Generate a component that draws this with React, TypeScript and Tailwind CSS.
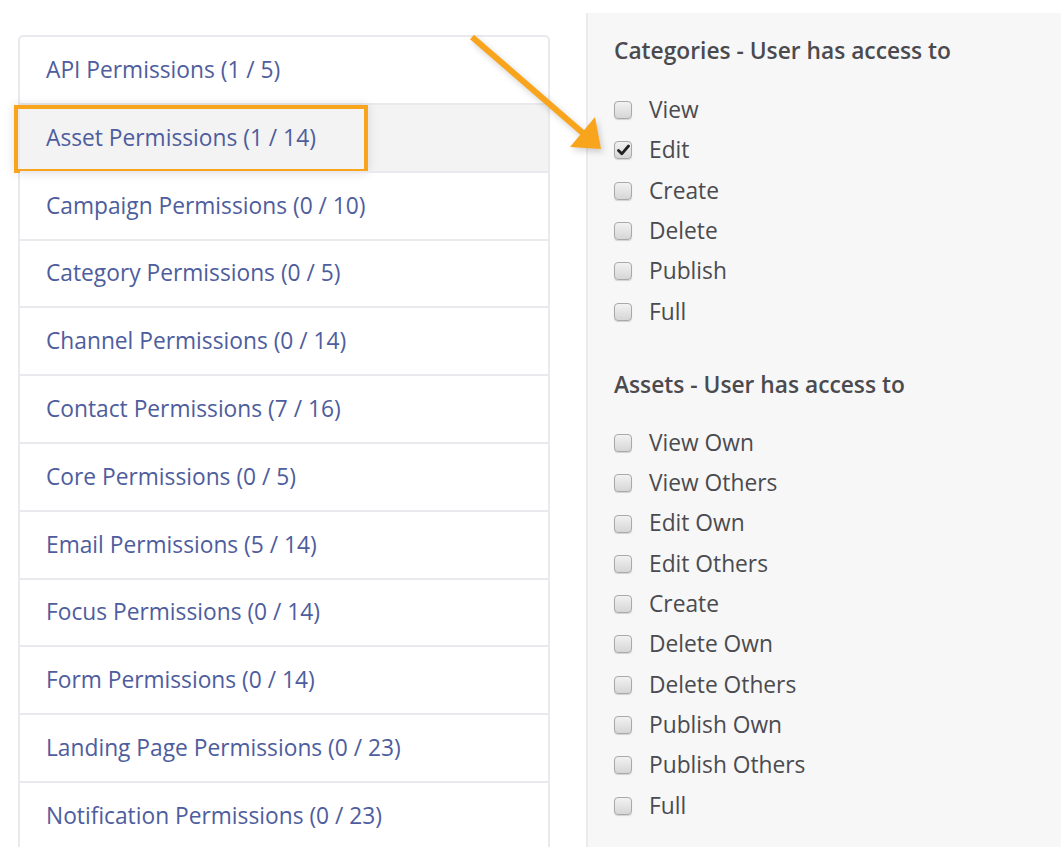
import React from "react";

const perms = [
  "API Permissions (1 / 5)",
  "Asset Permissions (1 / 14)",
  "Campaign Permissions (0 / 10)",
  "Category Permissions (0 / 5)",
  "Channel Permissions (0 / 14)",
  "Contact Permissions (7 / 16)",
  "Core Permissions (0 / 5)",
  "Email Permissions (5 / 14)",
  "Focus Permissions (0 / 14)",
  "Form Permissions (0 / 14)",
  "Landing Page Permissions (0 / 23)",
  "Notification Permissions (0 / 23)",
];

const cat = ["View", "Edit", "Create", "Delete", "Publish", "Full"];
const assets = [
  "View Own",
  "View Others",
  "Edit Own",
  "Edit Others",
  "Create",
  "Delete Own",
  "Delete Others",
  "Publish Own",
  "Publish Others",
  "Full",
];

function Box({ checked }: { checked?: boolean }) {
  return (
    <div className="w-[18px] h-[18px] rounded-[4px] border border-[#a9a9a9] bg-gradient-to-b from-[#f2f2f2] to-[#d6d6d6] shadow-[0_1px_1px_rgba(0,0,0,0.15)] flex items-center justify-center shrink-0">
      {checked && (
        <svg width="13" height="12" viewBox="0 0 13 12">
          <path d="M1.5 6.5 L4.8 9.8 L11.5 2" fill="none" stroke="#222" strokeWidth="2.8" strokeLinecap="round" strokeLinejoin="round" />
        </svg>
      )}
    </div>
  );
}

function Row({ label, checked }: { label: string; checked?: boolean }) {
  return (
    <div className="flex items-center h-[40.3px]">
      <Box checked={checked} />
      <span className="ml-[17px] text-[22.75px] text-[#4b4b4f]">{label}</span>
    </div>
  );
}

export default function App() {
  return (
    <div
      className="relative w-[1061px] h-[847px] overflow-hidden bg-white flex"
      style={{ fontFamily: "'Open Sans', 'Noto Sans', sans-serif" }}
    >
      <div className="pl-[18px] pt-[35px] w-[550px] shrink-0">
        <div className="border-2 border-[#eaeaee] rounded-[5px] bg-white">
          {perms.map((p, i) => (
            <div
              key={p}
              className={
                "relative flex items-center pl-[26px] text-[22.75px] text-[#4e5d9d] " +
                (i > 0 ? "border-t-2 border-[#eaeaee] h-[67.8px] " : "h-[66px] ") +
                (i === 1 ? "bg-[#f3f3f3]" : "")
              }
            >
              {p}
              {i === 1 && (
                <div className="absolute left-[-6px] top-0 w-[354px] h-[68px] border-[4px] border-[#f8a51d] shadow-[0_0_10px_rgba(0,0,0,0.12)]" />
              )}
            </div>
          ))}
        </div>
      </div>
      <div className="ml-[36px] mt-[13px] flex-1 bg-[#f7f7f7] border-l-2 border-[#ebebef] pl-[26px] pt-[24px]">
        <h3 className="text-[22.75px] leading-[28px] font-semibold text-[#4b4b4f]">
          Categories - User has access to
        </h3>
        <div className="mt-[25px]">
          {cat.map((c) => (
            <Row key={c} label={c} checked={c === "Edit"} />
          ))}
        </div>
        <h3 className="mt-[39px] text-[22.75px] leading-[28px] font-semibold text-[#4b4b4f]">
          Assets - User has access to
        </h3>
        <div className="mt-[24px]">
          {assets.map((c, i) => (
            <Row key={c + i} label={c} />
          ))}
        </div>
      </div>
      <svg
        className="absolute left-0 top-0 pointer-events-none"
        width="1061"
        height="847"
        style={{ filter: "drop-shadow(2px 3px 3px rgba(0,0,0,0.18))" }}
      >
        <line x1="472" y1="37" x2="584" y2="134" stroke="#f8a51d" strokeWidth="6" strokeLinecap="butt" />
        <polygon points="601,149 570,147 595,117" fill="#f8a51d" />
      </svg>
    </div>
  );
}
